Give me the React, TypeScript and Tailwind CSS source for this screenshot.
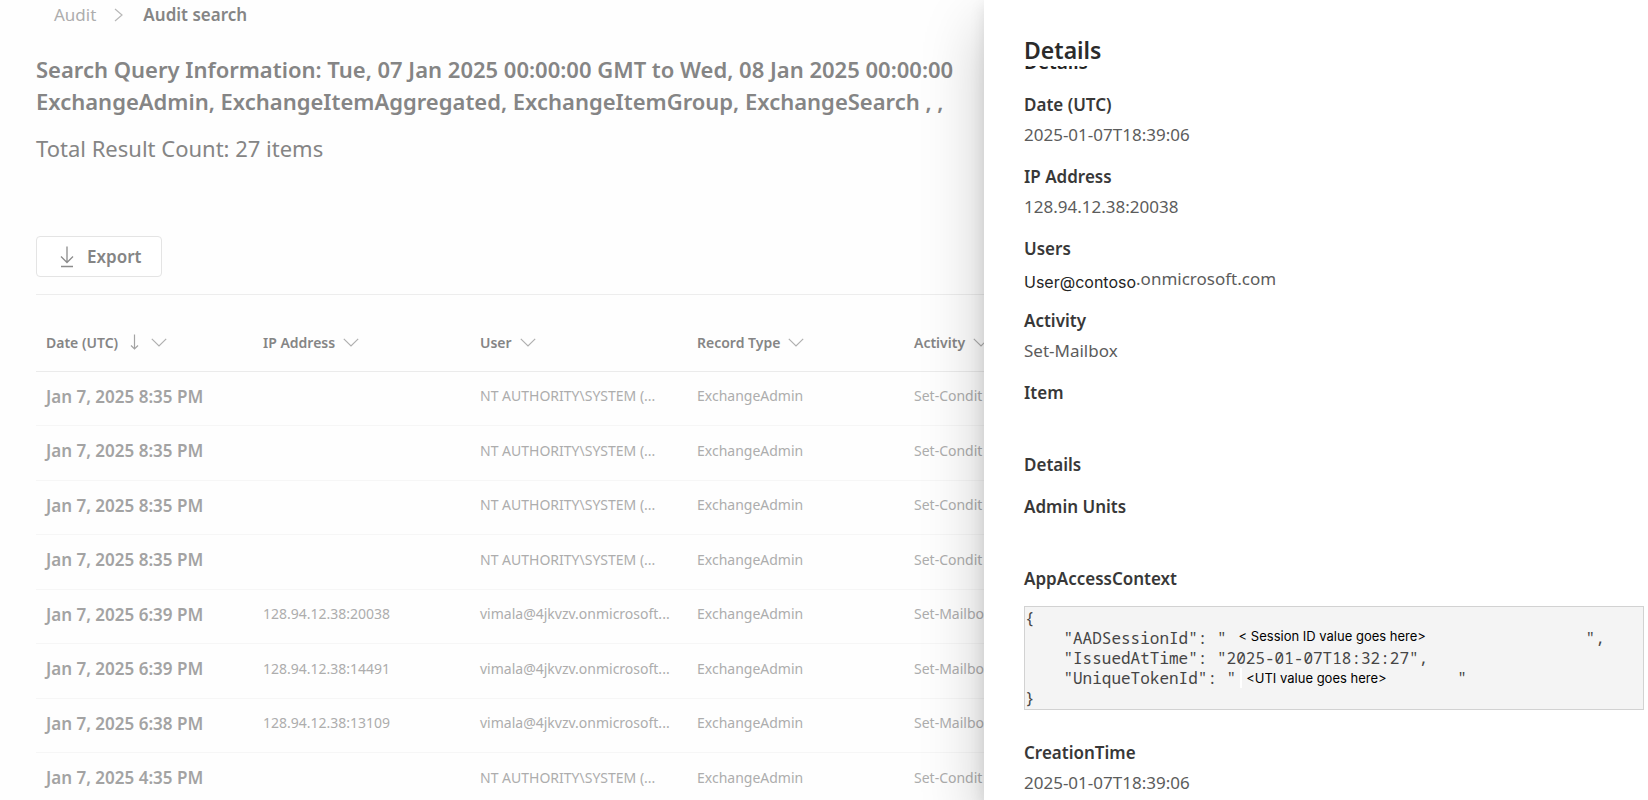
import React from 'react';

type Row = { date: string; ip: string; user: string; type: string; activity: string };

const SYSTEM = 'NT AUTHORITY\\SYSTEM (...';
const VIMALA = 'vimala@4jkvzv.onmicrosoft...';

const rows: Row[] = [
  { date: 'Jan 7, 2025 8:35 PM', ip: '', user: SYSTEM, type: 'ExchangeAdmin', activity: 'Set-Condit' },
  { date: 'Jan 7, 2025 8:35 PM', ip: '', user: SYSTEM, type: 'ExchangeAdmin', activity: 'Set-Condit' },
  { date: 'Jan 7, 2025 8:35 PM', ip: '', user: SYSTEM, type: 'ExchangeAdmin', activity: 'Set-Condit' },
  { date: 'Jan 7, 2025 8:35 PM', ip: '', user: SYSTEM, type: 'ExchangeAdmin', activity: 'Set-Condit' },
  { date: 'Jan 7, 2025 6:39 PM', ip: '128.94.12.38:20038', user: VIMALA, type: 'ExchangeAdmin', activity: 'Set-Mailbo' },
  { date: 'Jan 7, 2025 6:39 PM', ip: '128.94.12.38:14491', user: VIMALA, type: 'ExchangeAdmin', activity: 'Set-Mailbo' },
  { date: 'Jan 7, 2025 6:38 PM', ip: '128.94.12.38:13109', user: VIMALA, type: 'ExchangeAdmin', activity: 'Set-Mailbo' },
  { date: 'Jan 7, 2025 4:35 PM', ip: '', user: SYSTEM, type: 'ExchangeAdmin', activity: 'Set-Condit' },
];

const columns = ['Date (UTC)', 'IP Address', 'User', 'Record Type', 'Activity'];

function ChevronDown() {
  return (
    <svg width="16" height="9" viewBox="0 0 16 9" fill="none" stroke="#b0b0b0" strokeWidth="1.2" aria-hidden="true">
      <path d="M0.8 0.8 L8 8 L15.2 0.8" />
    </svg>
  );
}

function SortArrow() {
  return (
    <svg width="9" height="16" viewBox="0 0 9 16" fill="none" stroke="#a3a3a3" strokeWidth="1.2" aria-hidden="true">
      <path d="M4.5 0.5 V15 M1 11.5 L4.5 15 L8 11.5" />
    </svg>
  );
}

function DownloadIcon() {
  return (
    <svg width="14" height="22" viewBox="0 0 14 22" fill="none" stroke="#8c8c8c" strokeWidth="1.3" aria-hidden="true">
      <path d="M7 0.5 V16.5 M1 10.5 L7 16.5 L13 10.5 M1 20.5 H13" />
    </svg>
  );
}

function Field({ label, children }: { label: string; children?: React.ReactNode }) {
  return (
    <div className="leading-[30px]">
      <dt className="font-semibold text-[#383838]">{label}</dt>
      {children !== undefined && <dd className="h-[30px] text-[#5c5c5c]">{children}</dd>}
    </div>
  );
}

function AuditResults() {
  return (
    <main className="min-w-0 flex-1 overflow-hidden bg-[#fefefe] pl-9">
      <nav aria-label="Breadcrumb" className="flex h-[30px] items-center pl-[18px] text-[17px]">
        <a href="#audit" className="text-[#adadad]">Audit</a>
        <svg className="ml-[18px] mr-5" width="9" height="14" viewBox="0 0 9 14" fill="none" stroke="#b8b8b8" strokeWidth="1.2" aria-hidden="true">
          <path d="M1 1 L8 7 L1 13" />
        </svg>
        <span className="font-semibold text-[#858585]">Audit search</span>
      </nav>

      <h1 className="mt-[23px] whitespace-nowrap text-[22px] font-semibold leading-8 text-[#858585]">
        Search Query Information: Tue, 07 Jan 2025 00:00:00 GMT to Wed, 08 Jan 2025 00:00:00
        <br />
        ExchangeAdmin, ExchangeItemAggregated, ExchangeItemGroup, ExchangeSearch , ,
      </h1>
      <p className="mt-[15px] text-[22px] leading-8 text-[#858585]">Total Result Count: 27 items</p>

      <button type="button" className="mt-[72px] flex h-[41px] items-center gap-[13px] rounded-[4px] border border-[#e4e4e4] bg-white pl-[23px] pr-5 text-[17px] font-semibold text-[#858585]">
        <DownloadIcon />
        Export
      </button>

      <table className="mt-[17px] w-[1085px] table-fixed border-collapse border-t border-[#ededed] text-left text-[14px]">
        <thead>
          <tr className="h-[77px] border-b border-[#ebebeb]">
            {columns.map((name, i) => (
              <th key={name} scope="col" className="pb-0 pl-[10px] pt-[18px] font-semibold text-[#858585]">
                <span className="flex items-center gap-2">
                  {name}
                  {i === 0 && <span className="px-1"><SortArrow /></span>}
                  <ChevronDown />
                </span>
              </th>
            ))}
          </tr>
        </thead>
        <tbody>
          {rows.map((row, i) => (
            <tr key={i} className="h-[54px] border-b border-[#f6f6f6] text-[#adadad] even:h-[55px]">
              <td className="pb-1 pl-[10px] text-[17px] font-semibold text-[#a3a3a3]">{row.date}</td>
              <td className="pb-1.5 pl-[10px]">{row.ip}</td>
              <td className="whitespace-nowrap pb-1.5 pl-[10px]">{row.user}</td>
              <td className="pb-1.5 pl-[10px]">{row.type}</td>
              <td className="whitespace-nowrap pb-1.5 pl-[10px]">{row.activity}</td>
            </tr>
          ))}
        </tbody>
      </table>
    </main>
  );
}

function DetailsPanel() {
  return (
    <aside className="z-10 w-[664px] shrink-0 bg-white pl-10 pr-1 pt-[34px] shadow-[0_26px_58px_rgba(0,0,0,0.22),0_5px_14px_rgba(0,0,0,0.10)]">
      <h2 className="text-[23px] font-semibold leading-8 text-[#2b2b2b]">Details</h2>
      <div className="flex h-[3px] items-end overflow-hidden text-[19px] font-semibold leading-[14px] text-[#242424]" aria-hidden="true">
        Details
      </div>

      <dl className="mt-[21px] flex flex-col gap-3 text-[17px]">
        <Field label="Date (UTC)">2025-01-07T18:39:06</Field>
        <Field label="IP Address">128.94.12.38:20038</Field>
        <Field label="Users">
          <span className="flex">
            <span className="pt-[3px] font-['Inter',sans-serif] text-[16px] text-[#242424]">User@contoso</span>
            .onmicrosoft.com
          </span>
        </Field>
        <Field label="Activity">Set-Mailbox</Field>
        <Field label="Item">{''}</Field>
        <Field label="Details" />
        <Field label="Admin Units">{''}</Field>
        <div>
          <dt className="font-semibold leading-[30px] text-[#383838]">AppAccessContext</dt>
          <dd className="mb-4 mt-3 whitespace-pre border border-[#d2d2d2] bg-[#f4f4f4] py-px font-['Noto_Sans_Mono','DejaVu_Sans_Mono',monospace] text-[16px] leading-5 text-[#454545]">
            <div>{'{'}</div>
            <div className="flex">
              {'    "AADSessionId": "'}
              <span className="ml-3 w-[347px] font-['Inter',sans-serif] text-[13px] leading-4 text-black">{'< Session ID value goes here>'}</span>
              {'",'}
            </div>
            <div>{'    "IssuedAtTime": "2025-01-07T18:32:27",'}</div>
            <div className="flex">
              {'    "UniqueTokenId": "'}
              <span className="ml-1 w-[217px] border-l-2 border-white pl-1 font-['Inter',sans-serif] text-[13px] text-black">{'<UTI value goes here>'}</span>
              {'"'}
            </div>
            <div>{'}'}</div>
          </dd>
        </div>
        <Field label="CreationTime">2025-01-07T18:39:06</Field>
      </dl>
    </aside>
  );
}

export default function App() {
  return (
    <div className="flex h-screen overflow-hidden bg-white font-['Noto_Sans','Open_Sans',sans-serif]">
      <AuditResults />
      <DetailsPanel />
    </div>
  );
}
